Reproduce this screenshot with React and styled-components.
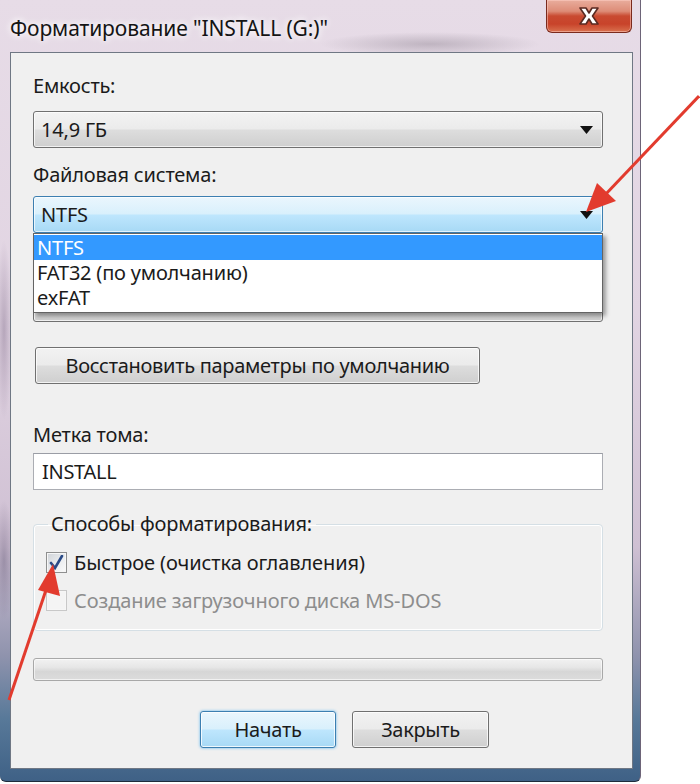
import React from "react";
import styled, { createGlobalStyle, css } from "styled-components";

const GlobalStyle = createGlobalStyle`
  html, body { margin: 0; padding: 0; background: #ffffff; }
  body { font-family: "Noto Sans", "Open Sans", sans-serif; color: #1b1b1b; }
`;

const Page = styled.div`
  position: relative;
  width: 700px;
  height: 784px;
  overflow: hidden;
  background: #ffffff;
`;

const Frame = styled.div`
  width: 641px;
  height: 782px;
  box-sizing: border-box;
  padding: 0 7px 12px 10px;
  display: flex;
  flex-direction: column;
  border-right: 1px solid #6d6478;
  border-bottom: 1px solid #1e2c3c;
  border-radius: 0 0 6px 6px;
  background:
    radial-gradient(ellipse 110px 12px at 430px 44px, rgba(90, 80, 95, 0.28), transparent),
    radial-gradient(ellipse 8px 90px at 4px 330px, rgba(120, 100, 130, 0.4), transparent),
    radial-gradient(ellipse 10px 60px at 4px 560px, rgba(90, 80, 110, 0.4), transparent),
    linear-gradient(180deg, #e7dce7 0%, #e1d4e2 40%, #cfc0d3 70%, #8f93ad 84%, #587999 92%, #3f6186 100%);
`;

const TitleBar = styled.div`
  height: 52px;
  display: flex;
  align-items: flex-start;
  justify-content: space-between;
`;

const Title = styled.div`
  margin-top: 14px;
  font-size: 21px;
  line-height: 28px;
  letter-spacing: -0.1px;
  color: #141414;
  text-shadow: 0 0 6px #ffffff, 0 0 10px #ffffff;
`;

const CloseButton = styled.div`
  width: 86px;
  height: 33px;
  box-sizing: border-box;
  margin-right: 1px;
  display: flex;
  align-items: center;
  justify-content: center;
  border: 1px solid #7a2a1d;
  border-top: none;
  border-radius: 0 0 6px 6px;
  background: linear-gradient(180deg, #e9ad9d 0%, #dd8c77 35%, #c94a31 50%, #c8432a 75%, #d9714f 100%);
  box-shadow: inset 0 0 0 1px rgba(255, 210, 200, 0.5);
`;

const Panel = styled.div`
  flex: 1;
  box-sizing: border-box;
  background: #f0f0f0;
  border: 1px solid #6f7784;
  padding: 0 29px 0 22px;
  display: flex;
  flex-direction: column;
`;

const Label = styled.div`
  margin-top: ${(p) => p.$top}px;
  font-size: 20px;
  line-height: 24px;
  letter-spacing: -0.2px;
  color: #1b1b1b;
`;

const Spacer = styled.div`
  height: ${(p) => p.$size}px;
`;

const ComboWrap = styled.div`
  position: relative;
  margin-top: ${(p) => p.$top}px;
`;

const Combo = styled.div`
  height: 37px;
  box-sizing: border-box;
  display: flex;
  align-items: center;
  justify-content: space-between;
  padding: 0 9px 0 7px;
  border: 1px solid #707070;
  border-radius: 3px;
  font-size: 20px;
  letter-spacing: -0.2px;
  background: linear-gradient(180deg, #f3f3f3 0%, #ebebeb 48%, #dddddd 52%, #cfcfcf 100%);
  box-shadow: inset 0 0 0 1px rgba(255, 255, 255, 0.7);
  ${(p) =>
    p.$active &&
    css`
      border-color: #3c7fb1;
      background: linear-gradient(180deg, #eaf6fd 0%, #d9f0fc 48%, #bee6fd 52%, #a7d9f5 100%);
    `}
`;

const DropList = styled.div`
  position: absolute;
  top: 100%;
  left: 0;
  right: 0;
  z-index: 2;
  padding: 1px 0 2px;
  background: #ffffff;
  border: 1px solid #646464;
  box-shadow: 3px 3px 4px rgba(0, 0, 0, 0.35);
`;

const ListItem = styled.div`
  height: 25px;
  line-height: 25px;
  padding-left: 3px;
  font-size: 20px;
  letter-spacing: -0.2px;
  color: ${(p) => (p.$selected ? "#ffffff" : "#1b1b1b")};
  background: ${(p) => (p.$selected ? "#3399ff" : "transparent")};
`;

const Button = styled.div`
  height: 37px;
  box-sizing: border-box;
  display: flex;
  align-items: center;
  justify-content: center;
  width: ${(p) => p.$width}px;
  font-size: 20px;
  letter-spacing: -0.3px;
  border: 1px solid #707070;
  border-radius: 3px;
  background: linear-gradient(180deg, #f2f2f2 0%, #ebebeb 48%, #dddddd 52%, #cfcfcf 100%);
  box-shadow: inset 0 0 0 1px rgba(255, 255, 255, 0.75);
  ${(p) =>
    p.$default &&
    css`
      border-color: #3c7fb1;
      background: linear-gradient(180deg, #eaf6fd 0%, #d9f0fc 48%, #bee6fd 52%, #a7d9f5 100%);
      box-shadow: inset 0 0 0 1px rgba(255, 255, 255, 0.8), 0 0 3px #5fb6ee;
    `}
`;

const RestoreButton = styled(Button)`
  margin-top: 25px;
  margin-left: 2px;
`;

const TextInput = styled.div`
  margin-top: 6px;
  height: 37px;
  box-sizing: border-box;
  display: flex;
  align-items: center;
  padding-left: 8px;
  background: #ffffff;
  border: 1px solid #abadb3;
  border-top-color: #9a9da5;
  font-size: 20px;
  letter-spacing: -0.3px;
`;

const Group = styled.fieldset`
  margin: 22px 0 0;
  padding: 16px 12px 0;
  height: 119px;
  box-sizing: border-box;
  border: 1px solid #d5dfe5;
  border-radius: 4px;
  box-shadow: inset 0 0 0 1px #ffffff;
  display: flex;
  flex-direction: column;
  gap: 17px;
`;

const Legend = styled.legend`
  margin-left: 2px;
  padding: 0 4px 0 3px;
  font-size: 20px;
  line-height: 24px;
  letter-spacing: -0.2px;
`;

const CheckRow = styled.div`
  display: flex;
  align-items: center;
  gap: 7px;
  height: 21px;
  font-size: 20px;
  letter-spacing: -0.1px;
  color: ${(p) => (p.$disabled ? "#8d8d8d" : "#1b1b1b")};
`;

const Box = styled.div`
  width: 21px;
  height: 21px;
  box-sizing: border-box;
  display: flex;
  align-items: center;
  justify-content: center;
  border: 1px solid ${(p) => (p.$disabled ? "#c8c8c8" : "#8e8f8f")};
  background: ${(p) =>
    p.$disabled ? "#f4f4f4" : "linear-gradient(135deg, #cfd3d8 0%, #eceef0 60%, #fafafa 100%)"};
  box-shadow: inset 0 0 0 1px #f6f6f6;
`;

const Progress = styled.div`
  margin-top: 27px;
  height: 23px;
  box-sizing: border-box;
  border: 1px solid #a8a8a8;
  border-radius: 3px;
  background: linear-gradient(180deg, #f2f2f2 0%, #e6e6e6 40%, #d6d6d6 60%, #dcdcdc 100%);
  box-shadow: inset 0 0 0 1px rgba(255, 255, 255, 0.6);
`;

const ButtonRow = styled.div`
  margin-top: 30px;
  display: flex;
  gap: 16px;
  padding-left: 167px;
`;

const Overlay = styled.svg`
  position: absolute;
  left: 0;
  top: 0;
  z-index: 5;
  pointer-events: none;
`;

const ArrowDown = () => (
  <svg width="13" height="8" viewBox="0 0 13 8">
    <polygon points="0,0 13,0 6.5,8" fill="#111" />
  </svg>
);

const CloseGlyph = () => (
  <svg width="26" height="20" viewBox="0 0 26 20">
    <path
      d="M4 2 L10 2 L13 7 L16 2 L22 2 L16.5 10 L22 18 L16 18 L13 13 L10 18 L4 18 L9.5 10 Z"
      fill="#ffffff"
      stroke="#5a2a22"
      strokeWidth="1.6"
      strokeLinejoin="round"
    />
  </svg>
);

const Check = () => (
  <svg width="15" height="15" viewBox="0 0 15 15">
    <path d="M2 8 L6 13 L13 1" fill="none" stroke="#2a4a86" strokeWidth="2.6" strokeLinecap="round" />
  </svg>
);

export default function App() {
  return (
    <Page>
      <GlobalStyle />
      <Frame>
        <TitleBar>
          <Title>Форматирование "INSTALL (G:)"</Title>
          <CloseButton>
            <CloseGlyph />
          </CloseButton>
        </TitleBar>
        <Panel>
          <Label $top={21}>Емкость:</Label>
          <ComboWrap $top={13}>
            <Combo>
              <span>14,9 ГБ</span>
              <ArrowDown />
            </Combo>
          </ComboWrap>
          <Label $top={15}>Файловая система:</Label>
          <ComboWrap $top={9}>
            <Combo $active>
              <span>NTFS</span>
              <ArrowDown />
            </Combo>
            <DropList>
              <ListItem $selected>NTFS</ListItem>
              <ListItem>FAT32 (по умолчанию)</ListItem>
              <ListItem>exFAT</ListItem>
            </DropList>
          </ComboWrap>
          <Spacer $size={52} />
          <Combo />
          <RestoreButton $width={445}>Восстановить параметры по умолчанию</RestoreButton>
          <Label $top={39}>Метка тома:</Label>
          <TextInput>INSTALL</TextInput>
          <Group>
            <Legend>Способы форматирования:</Legend>
            <CheckRow>
              <Box>
                <Check />
              </Box>
              Быстрое (очистка оглавления)
            </CheckRow>
            <CheckRow $disabled>
              <Box $disabled />
              Создание загрузочного диска MS-DOS
            </CheckRow>
          </Group>
          <Progress />
          <ButtonRow>
            <Button $default $width={136}>Начать</Button>
            <Button $width={137}>Закрыть</Button>
          </ButtonRow>
        </Panel>
      </Frame>
      <Overlay width="700" height="784" viewBox="0 0 700 784">
        <line x1="699" y1="96" x2="604" y2="196" stroke="#e23b2e" strokeWidth="3" />
        <polygon points="586,212 597,183 616,201" fill="#e23b2e" />
        <line x1="9" y1="700" x2="46" y2="590" stroke="#e23b2e" strokeWidth="3" />
        <polygon points="53,564 38,590 60,596" fill="#e23b2e" />
      </Overlay>
    </Page>
  );
}
